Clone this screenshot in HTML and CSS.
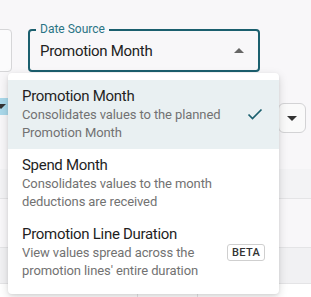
FILE: index.html
```html
<!DOCTYPE html>
<html lang="en">
<head>
    <meta charset="UTF-8">
    <meta name="viewport" content="width=device-width, initial-scale=1.0">
    <title>Date Source</title>
    <link rel="stylesheet" href="styles.css">
</head>
<body>
    <div class="page">
        <div class="filters">
            <div class="input-stub"></div>
            <div class="field">
                <span class="field-label">Date Source</span>
                <span class="field-value">Promotion Month</span>
                <span class="caret-up"></span>
            </div>
        </div>

        <div class="toolbar">
            <div class="chip"><span class="caret-down"></span></div>
            <div class="mini-select"><span class="caret-down"></span></div>
        </div>

        <div class="table">
            <div class="row row-head"></div>
            <div class="row"></div>
            <div class="row row-shade"></div>
            <div class="row row-cols">
                <span class="col"></span>
                <span class="col"></span>
            </div>
        </div>

        <!-- open dropdown -->
        <ul class="menu">
            <li class="option selected">
                <div class="option-text">
                    <div class="option-title">Promotion Month</div>
                    <div class="option-desc">Consolidates values to the planned Promotion Month</div>
                </div>
                <svg class="check" width="16" height="12" viewBox="0 0 16 12">
                    <path d="M1.5 6.5 L5.5 10.5 L14.5 1.5" fill="none" stroke="#1b5f6e" stroke-width="1.7"/>
                </svg>
            </li>
            <li class="option">
                <div class="option-text">
                    <div class="option-title">Spend Month</div>
                    <div class="option-desc">Consolidates values to the month deductions are received</div>
                </div>
            </li>
            <li class="option">
                <div class="option-text">
                    <div class="option-title">Promotion Line Duration</div>
                    <div class="option-desc">View values spread across the promotion lines' entire duration</div>
                </div>
                <span class="badge">BETA</span>
            </li>
        </ul>
    </div>
</body>
</html>
```

FILE: styles.css
```css
* {
    box-sizing: border-box;
}

body {
    margin: 0;
    font-family: Roboto, "Noto Sans", sans-serif;
    background-color: #f8f7f9;
}

.page {
    position: relative;
    height: 297px;
    padding-top: 29px;
    overflow: hidden;
}

.filters {
    display: flex;
    gap: 16px;
    margin-left: -28px;
}

.input-stub {
    width: 40px;
    height: 43px;
    border: 1px solid #d6d6d8;
    border-radius: 4px;
    background-color: #fbfbfc;
}

.field {
    position: relative;
    width: 232px;
    height: 43px;
    border: 2px solid #1b5f6e;
    border-radius: 4px;
    display: flex;
    align-items: center;
    padding: 0 14px 0 10px;
}

.field-label {
    position: absolute;
    top: -10px;
    left: 6px;
    padding: 0 4px;
    background-color: #f8f7f9;
    color: #2a7485;
    font-size: 12px;
    line-height: 16px;
}

.field-value {
    flex: 1;
    color: #222;
    font-size: 15px;
    letter-spacing: -0.3px;
}

.caret-up {
    width: 0;
    height: 0;
    border-left: 5px solid transparent;
    border-right: 5px solid transparent;
    border-bottom: 5px solid #666;
}

.caret-down {
    width: 0;
    height: 0;
    border-left: 5px solid transparent;
    border-right: 5px solid transparent;
    border-top: 5px solid #333;
}

.toolbar {
    display: flex;
    justify-content: space-between;
    align-items: flex-start;
    margin-top: 26px;
}

.chip {
    width: 8px;
    height: 17px;
    background-color: #a9d8ea;
    display: flex;
    align-items: center;
    justify-content: flex-end;
    overflow: hidden;
}

.chip .caret-down {
    margin-right: 2px;
    flex-shrink: 0;
}

.mini-select {
    width: 28px;
    height: 30px;
    margin-top: 5px;
    margin-right: 5px;
    border: 1px solid #d3d3d5;
    border-radius: 6px;
    background-color: #fafafa;
    display: flex;
    align-items: center;
    justify-content: center;
}

.table {
    margin-top: 36px;
}

.row {
    height: 49px;
    border-bottom: 1px solid #e4e4e6;
}

.row-head {
    height: 30px;
    background-color: #f3f3f5;
}

.row-shade {
    height: 36px;
    background-color: #f1f1f3;
}

.row-cols {
    display: flex;
    background-color: #fff;
    padding-left: 137px;
}

.col {
    width: 60px;
    border-left: 1px solid #e4e4e6;
}

.menu {
    position: absolute;
    top: 73px;
    left: 8px;
    width: 271px;
    margin: 0;
    padding: 7px 0;
    list-style: none;
    background-color: #fff;
    border-radius: 4px;
    box-shadow: 0 3px 10px rgba(0, 0, 0, 0.15), 0 1px 3px rgba(0, 0, 0, 0.07);
}

.option {
    display: flex;
    align-items: center;
    padding: 6px 14px 7px;
}

.option.selected {
    background-color: #e9f0f2;
}

.option-text {
    width: 205px;
}

.option-title {
    color: #1f1f1f;
    font-size: 15px;
    line-height: 20px;
    letter-spacing: -0.3px;
}

.option-desc {
    color: #727272;
    font-size: 13px;
    line-height: 18px;
    letter-spacing: -0.1px;
}

.check {
    margin-left: auto;
    margin-right: 2px;
}

.badge {
    margin-left: auto;
    padding: 1px 4px;
    border: 1px solid #cfcfcf;
    border-radius: 3px;
    color: #333;
    font-size: 11px;
    font-weight: 500;
    letter-spacing: 0.3px;
    line-height: 13px;
}
```
